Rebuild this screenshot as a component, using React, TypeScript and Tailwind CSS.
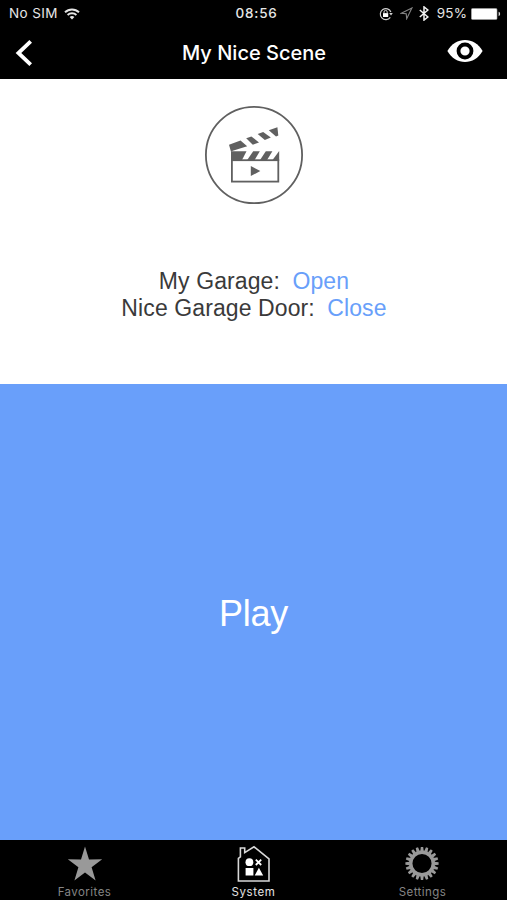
import React from 'react';

function WifiIcon() {
  return (
    <svg width="16" height="12" viewBox="0 0 16 12" fill="none" stroke="#e6e6e6" strokeWidth="1.9">
      <path d="M1 4.3a10 10 0 0 1 14 0" />
      <path d="M3.6 7a6.4 6.4 0 0 1 8.8 0" />
      <path d="M5.6 9.1a3.5 3.5 0 0 1 4.8 0L8 11.6z" fill="#e6e6e6" stroke="none" />
    </svg>
  );
}

function RotationLockIcon() {
  return (
    <svg width="14" height="14" viewBox="0 0 14 14" fill="none" stroke="#d0d0d0">
      <path d="M11.3 10.3A5.5 5.5 0 1 1 11.9 5" strokeWidth="1.2" />
      <path d="M10.2 6h3.6L12 8.6z" fill="#d0d0d0" stroke="none" />
      <rect x="4" y="6.1" width="5.2" height="3.9" fill="#fff" stroke="none" />
      <path d="M5 6.3V5a1.6 1.6 0 0 1 3.2 0v1.3" strokeWidth="1" />
    </svg>
  );
}

function LocationIcon() {
  return (
    <svg width="13" height="13" viewBox="0 0 13 13" fill="none" stroke="#858585" strokeWidth="1.1">
      <path d="M11.9 1 1.2 6.2l5 .5.5 5z" />
    </svg>
  );
}

function BluetoothIcon() {
  return (
    <svg width="10" height="15" viewBox="0 0 10 15" fill="none" stroke="#f2f2f2" strokeWidth="1.5">
      <path d="m.8 4 8.1 7L5 14.1V.9L8.9 4 .8 11" />
    </svg>
  );
}

function BatteryIcon() {
  return (
    <svg width="30" height="12" viewBox="0 0 30 12">
      <rect x=".4" y=".4" width="25.6" height="11.2" rx="1.3" fill="#fff" stroke="#aaa" strokeWidth=".6" />
      <path d="M27.6 3.8v4.4c2-.5 2-3.9 0-4.4z" fill="#ddd" />
    </svg>
  );
}

function SceneIcon() {
  return (
    <svg width="98" height="98" viewBox="0 0 98 98" fill="#606060">
      <circle cx="49" cy="49" r="48.1" fill="none" stroke="#606060" strokeWidth="1.8" />
      <rect x="26.9" y="54.2" width="46.4" height="21.4" fill="none" stroke="#606060" strokeWidth="1.8" />
      <path d="M26 45.3h15.5L36.5 55H26z" />
      <path d="M48.2 45.3h6.6L49 55h-7.5z" />
      <path d="M60.8 45.3h6.6L61.4 55h-7z" />
      <path d="M74.2 45V55h-7.4z" />
      <path d="m24 38.8 11.5-4.2 6.7 5.6-14.4 4.6-1.8 1z" />
      <path d="m41.2 32.3 5.2-1.7 7.6 5.8-6.2 2.3z" />
      <path d="m52.7 27.9 5.5-1.9 7.6 5.4-6 2.5z" />
      <path d="M63.8 24.2 72.4 21.2l.9 8.3-2.3 1z" />
      <path d="m45.8 60.1 9.5 5-9.5 5z" />
    </svg>
  );
}

function StarIcon() {
  return (
    <svg width="36" height="36" viewBox="0 0 36 36">
      <path d="m18 .6 4 12.8 13.2-.1-10.6 8 4 13.2L18 26.5 7.4 34.5l4-13.2-10.6-8 13.2.1z" fill="#999" />
    </svg>
  );
}

function HouseIcon() {
  return (
    <svg width="36" height="38" viewBox="0 0 36 38" fill="#fff">
      <path
        d="M2.4 36V13.4l2-1.6V3h4.3v4.6L18 1.8l15 12.1V36z"
        fill="none"
        stroke="#d8d8d8"
        strokeWidth="1.6"
      />
      <circle cx="13.4" cy="17.2" r="3.9" />
      <path d="m19.8 14.6 5.4 5.4m0-5.4-5.4 5.4" stroke="#fff" strokeWidth="1.8" fill="none" />
      <path d="M9.6 23h7.8v7.6H9.6zM22.9 22.7l4.3 7.9h-8.5z" />
    </svg>
  );
}

const teeth = Array.from({ length: 20 }, (_, i) => i * 18);

function GearIcon() {
  return (
    <svg width="37" height="36" viewBox="0 0 37 36">
      <circle cx="18" cy="17.5" r="11.3" fill="none" stroke="#999" strokeWidth="3.5" />
      {teeth.map((a) => (
        <path key={a} d="M16.3 5.2 16.8.9h2.4l.5 4.3z" fill="#999" transform={`rotate(${a} 18 17.5)`} />
      ))}
    </svg>
  );
}

function Tab({ label, icon, active = false }: { label: string; icon: React.ReactNode; active?: boolean }) {
  return (
    <button className="flex flex-1 flex-col items-center pt-[5px]">
      <span className="flex h-[38px] items-center">{icon}</span>
      <span
        className={`mt-[2px] text-[11.5px] leading-[14px] ${active ? 'tracking-[0.6px] text-[#e4e4e4]' : 'tracking-[0.45px] text-[#858585]'}`}
      >
        {label}
      </span>
    </button>
  );
}

export default function App() {
  return (
    <div className="flex h-[900px] w-[507px] flex-col overflow-hidden bg-white font-['Inter',sans-serif]">
      <header className="h-[79px] bg-black text-white">
        <div className="grid h-[27px] grid-cols-[1fr_auto_1fr] items-center pl-[9px] pr-[6px] text-[13px] text-[#e6e6e6]">
          <div className="flex items-center gap-[6px]">
            <span className="text-[13.5px] tracking-[0.4px]">No SIM</span>
            <WifiIcon />
          </div>
          <span className="pl-[3px] text-[13.5px] font-medium tracking-[0.8px]">08:56</span>
          <div className="flex items-center justify-end">
            <RotationLockIcon />
            <span className="ml-[7px] flex"><LocationIcon /></span>
            <span className="ml-[6px] flex"><BluetoothIcon /></span>
            <span className="ml-[8px] mr-[4px] text-[13.5px] tracking-[0.1px]">95%</span>
            <BatteryIcon />
          </div>
        </div>
        <div className="grid h-[51px] grid-cols-[1fr_auto_1fr] items-center pl-[15px] pr-[24px]">
          <button aria-label="Back" className="justify-self-start">
            <svg width="18" height="28" viewBox="0 0 18 28" fill="none" stroke="#fff" strokeWidth="3.8">
              <path d="M15.7 2.3 3.4 14l12.3 11.7" />
            </svg>
          </button>
          <h1 className="pl-[10px] text-[20px] font-medium">My Nice Scene</h1>
          <button aria-label="Show" className="justify-self-end pb-[3px]">
            <svg width="36" height="24" viewBox="0 0 36 24">
              <path d="M.4 12C8.5-2.7 27.5-2.7 35.6 12 27.5 26.7 8.5 26.7.4 12z" fill="#fff" />
              <circle cx="18" cy="12" r="6.5" fill="#fff" stroke="#000" strokeWidth="3.8" />
            </svg>
          </button>
        </div>
      </header>

      <main className="flex flex-1 flex-col font-['Liberation_Sans',Arial,sans-serif]">
        <section className="flex h-[305px] flex-col items-center pl-px pt-[27px]">
          <SceneIcon />
          <div className="mt-[64px] text-center text-[23px] leading-[27px] tracking-[0.1px] text-[#3a3a3a]">
            <p>My Garage: <span className="ml-[6px] text-[#699ffa]">Open</span></p>
            <p>Nice Garage Door: <span className="ml-[6px] text-[#699ffa]">Close</span></p>
          </div>
        </section>
        <button className="flex h-[456px] items-center justify-center bg-[#699ffa] pt-[4px] text-[36px] tracking-[-0.3px] text-white">
          Play
        </button>
      </main>

      <nav className="flex h-[60px] bg-black">
        <Tab label="Favorites" icon={<StarIcon />} />
        <Tab label="System" icon={<HouseIcon />} active />
        <Tab label="Settings" icon={<GearIcon />} />
      </nav>
    </div>
  );
}
